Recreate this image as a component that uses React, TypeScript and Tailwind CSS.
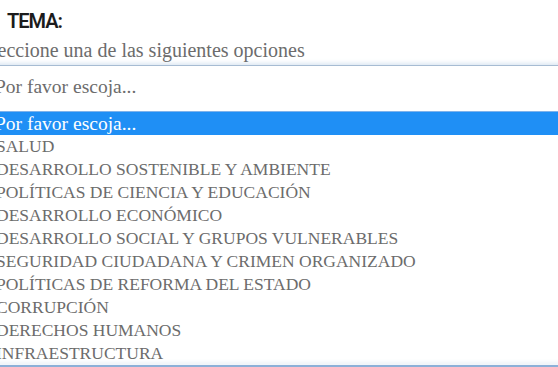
import React from "react";

const options = [
  "SALUD",
  "DESARROLLO SOSTENIBLE Y AMBIENTE",
  "POLÍTICAS DE CIENCIA Y EDUCACIÓN",
  "DESARROLLO ECONÓMICO",
  "DESARROLLO SOCIAL Y GRUPOS VULNERABLES",
  "SEGURIDAD CIUDADANA Y CRIMEN ORGANIZADO",
  "POLÍTICAS DE REFORMA DEL ESTADO",
  "CORRUPCIÓN",
  "DERECHOS HUMANOS",
  "INFRAESTRUCTURA",
];

export default function App() {
  return (
    <div className="w-[558px] h-[367px] overflow-hidden bg-white font-['Liberation_Serif',serif] text-[#6c6c6c]">
      {/* Label */}
      <div className="pt-[9px] pl-[7px] h-[33px] font-['Roboto',sans-serif] font-semibold text-[20px] leading-[24px] tracking-[-1px] text-[#1c1c1c]">
        TEMA:
      </div>
      <div className="mt-[6px] -ml-[28px] whitespace-nowrap text-[20px] leading-[22px]">
        Seleccione una de las siguientes opciones
      </div>

      {/* Select box */}
      <div className="mt-[4px] -ml-[10px] w-[580px] h-[46px] border-t border-[#a7bcd3] shadow-[0_-2px_4px_rgba(160,190,220,0.35)] bg-white pt-[9px] pl-[5px]">
        <div className="text-[19.5px] leading-[23px] whitespace-nowrap">Por favor escoja...</div>
      </div>

      {/* Dropdown list */}
      <div className="-ml-[10px] w-[580px] border-t border-[#7fb2ea]">
        <div className="h-[23px] bg-[#1f8ff5] pl-[5px] text-white text-[19.5px] leading-[23px] whitespace-nowrap">
          Por favor escoja...
        </div>
        {options.map((o) => (
          <div key={o} className="h-[23px] pl-[6px] text-[17.5px] leading-[23px] whitespace-nowrap">
            {o}
          </div>
        ))}
        <div className="h-[2px] border-t-2 border-[#8cb0d8] shadow-[0_-2px_4px_rgba(160,190,220,0.4)]" />
      </div>
    </div>
  );
}
